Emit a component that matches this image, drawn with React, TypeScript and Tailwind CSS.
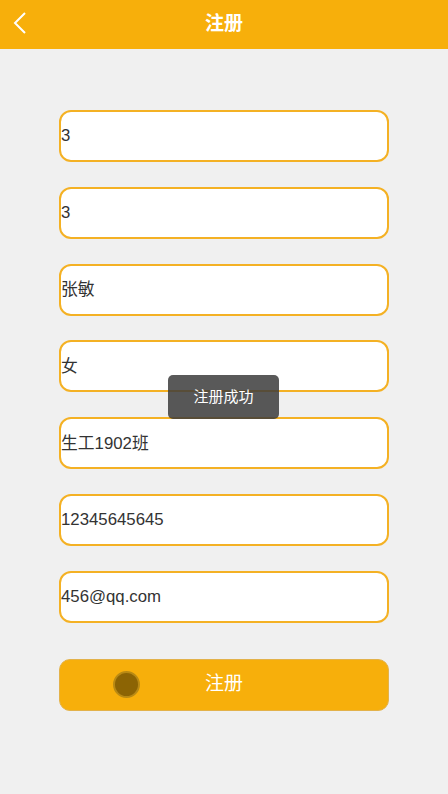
import React from "react";

const values = ["3", "3", "张敏", "女", "生工1902班", "12345645645", "456@qq.com"];

export default function App() {
  return (
    <div
      className="relative w-[448px] h-[794px] bg-[#f0f0f0] overflow-hidden"
      style={{ fontFamily: '"Liberation Sans", Arial, "Noto Sans CJK SC", sans-serif' }}
    >
      <div className="h-[49px] bg-[#f7af0b] flex items-center justify-center relative">
        <svg
          className="absolute left-[13px] top-[12px]"
          width="16"
          height="22"
          viewBox="0 0 16 22"
          fill="none"
          stroke="white"
          strokeWidth="2"
        >
          <path d="M12 1 L2 11 L12 21" />
        </svg>
        <span className="text-white text-[19px] font-bold">注册</span>
      </div>
      <div className="flex flex-col items-center pt-[61px] gap-[24.8px]">
        {values.map((v, i) => (
          <div
            key={i}
            className="w-[330px] h-[52px] bg-white border-2 border-[#f4b124] rounded-[12px] flex items-center"
          >
            <span className="text-[16.8px] text-[#333]">{v}</span>
          </div>
        ))}
        <div className="mt-[11px] w-[330px] h-[52px] bg-[#f7af0b] rounded-[11px] border border-[#e3b24a] flex items-center justify-center relative">
          <div className="absolute left-[53px] top-[11px] w-[27px] h-[27px] rounded-full bg-[#8c6404] border-[2px] border-[#b98a14]" />
          <span className="text-white text-[19px]">注册</span>
        </div>
      </div>
      <div className="absolute left-[168px] top-[375px] w-[111px] h-[44px] rounded-[5px] bg-[#3c3c3c]/85 flex items-center justify-center">
        <span className="text-white text-[15px]">注册成功</span>
      </div>
    </div>
  );
}
